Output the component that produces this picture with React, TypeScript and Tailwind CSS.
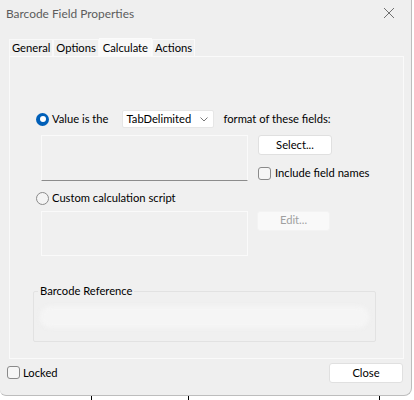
import React from 'react';

const font = { fontFamily: 'Lato, "Noto Sans", sans-serif' };

const Radio: React.FC<{ checked?: boolean }> = ({ checked }) =>
  checked ? (
    <div className="w-[13px] h-[13px] rounded-full bg-[#005fb8] flex items-center justify-center">
      <div className="w-[6px] h-[6px] rounded-full bg-white" />
    </div>
  ) : (
    <div className="w-[13px] h-[13px] rounded-full border border-[#8a8a8a] bg-[#f4f4f4]" />
  );

const Check: React.FC = () => (
  <div className="w-[13px] h-[13px] rounded-[3px] border border-[#8a8a8a] bg-[#f6f6f6]" />
);

export default function App() {
  const tabs = ['General', 'Options', 'Calculate', 'Actions'];
  return (
    <div className="w-[414px] h-[400px] bg-white overflow-hidden text-[11.2px] text-black" style={font}>
      <div className="w-[412px] h-[396px] bg-[#efefef] border-r border-b border-[#bdbdbd] rounded-br-[8px] rounded-bl-[6px] flex flex-col">
        {/* title bar */}
        <div className="h-[27px] flex items-center justify-between pl-[6px] pr-[16px]">
          <span className="text-[11.9px] text-[#5c5c5c]">Barcode Field Properties</span>
          <svg width="12" height="12" viewBox="0 0 12 12" className="mt-[-2px]">
            <path d="M1 1 L11 11 M11 1 L1 11" stroke="#707070" strokeWidth="1" />
          </svg>
        </div>

        {/* tabs */}
        <div className="flex items-end ml-[9px] mt-[11px] h-[18px]">
          {tabs.map((t) => (
            <div
              key={t}
              className={
                t === 'Calculate'
                  ? 'h-[19px] px-[3px] bg-[#f9f9f9] border border-b-0 border-[#fbfbfb] flex items-center -mb-px relative'
                  : 'h-[17px] px-[2px] bg-[#f0f0f0] border border-b-0 border-[#f9f9f9] flex items-center'
              }
            >
              {t}
            </div>
          ))}
        </div>

        {/* panel */}
        <div className="ml-[9px] w-[395px] h-[303px] bg-[#f0f0f0] border border-[#fafafa] flex flex-col">
          <div className="mt-[53px] ml-[26px] flex items-center h-[18px]">
            <Radio checked />
            <span className="ml-[3px]">Value is the</span>
            <div className="ml-[13px] w-[92px] h-[18px] bg-white border border-[#e6e6e6] rounded-[2px] flex items-center justify-between pl-[4px] pr-[5px]">
              <span>TabDelimited</span>
              <svg width="8" height="5" viewBox="0 0 8 5">
                <path d="M0.5 0.5 L4 4 L7.5 0.5" stroke="#777" fill="none" strokeWidth="1" />
              </svg>
            </div>
            <span className="ml-[10px]">format of these fields:</span>
          </div>

          <div className="flex mt-[7px] ml-[31px]">
            <div className="w-[207px] h-[46px] bg-[#f0f0f0] border border-[#fafafa] border-b-[#8c8c8c]" />
            <div className="ml-[10px] flex flex-col">
              <div className="w-[74px] h-[20px] bg-white border border-[#e0e0e0] rounded-[3px] flex items-center justify-center">
                Select...
              </div>
              <div className="flex items-center mt-[10px]">
                <Check />
                <span className="ml-[4px]">Include field names</span>
              </div>
            </div>
          </div>

          <div className="flex items-center mt-[9px] ml-[26px] h-[16px]">
            <Radio />
            <span className="ml-[3px]">Custom calculation script</span>
          </div>

          <div className="flex mt-[4px] ml-[31px]">
            <div className="w-[207px] h-[45px] bg-[#f0f0f0] border border-[#fafafa]" />
            <div className="ml-[9px] w-[73px] h-[20px] bg-[#f9f9f9] border border-[#f3f3f3] rounded-[3px] flex items-center justify-center text-[#a0a0a0]">
              Edit...
            </div>
          </div>

          {/* group box */}
          <div className="mt-[35px] ml-[23px] w-[343px] h-[51px] border border-[#e2e2e2] rounded-[2px] relative">
            <span className="absolute left-[4px] top-[-9px] px-[2px] bg-[#f0f0f0] leading-[16px]">Barcode Reference</span>
            <div className="mt-[14px] mx-[6px] h-[22px] rounded-full bg-[#f5f5f5] blur-[2px]" />
          </div>
        </div>

        {/* bottom row */}
        <div className="flex items-center justify-between mt-[4px] pl-[7px] pr-[8px]">
          <div className="flex items-center">
            <Check />
            <span className="ml-[3px]">Locked</span>
          </div>
          <div className="w-[74px] h-[20px] bg-white border border-[#e0e0e0] rounded-[3px] flex items-center justify-center">
            Close
          </div>
        </div>
      </div>
      <div className="flex h-[4px]">
        <div className="ml-[91px] w-px bg-black" />
        <div className="ml-[96px] w-px bg-black" />
        <div className="ml-[190px] w-px bg-black" />
      </div>
    </div>
  );
}
